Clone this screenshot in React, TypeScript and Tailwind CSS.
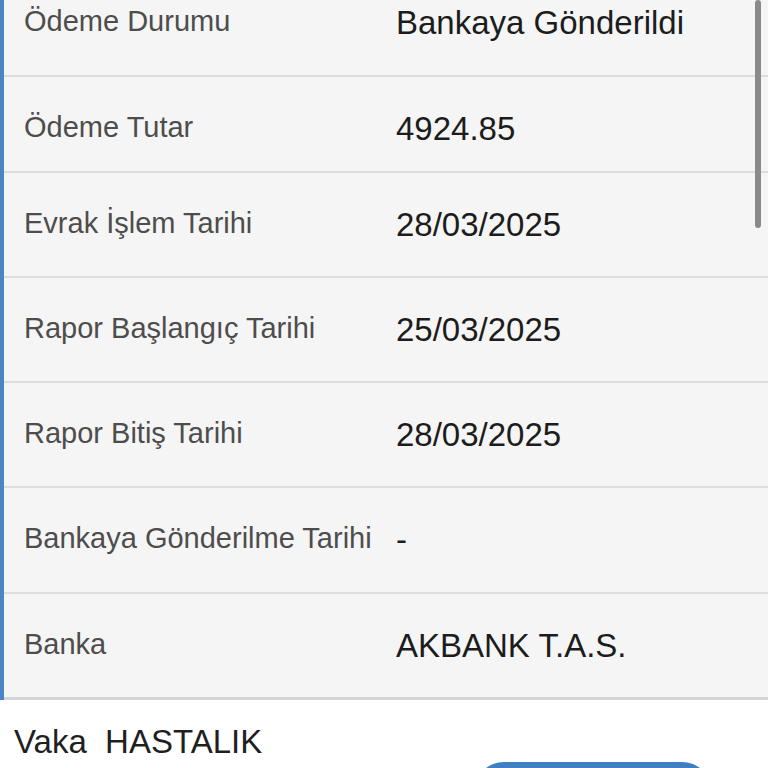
const rows: { label: string; value: string; h: string }[] = [
  { label: "Ödeme Durumu", value: "Bankaya Gönderildi", h: "h-[106px]" },
  { label: "Ödeme Tutar", value: "4924.85", h: "h-[96px]" },
  { label: "Evrak İşlem Tarihi", value: "28/03/2025", h: "h-[105px]" },
  { label: "Rapor Başlangıç Tarihi", value: "25/03/2025", h: "h-[105px]" },
  { label: "Rapor Bitiş Tarihi", value: "28/03/2025", h: "h-[105px]" },
  { label: "Bankaya Gönderilme Tarihi", value: "-", h: "h-[106px]" },
];

export default function App() {
  return (
    <div
      className="relative h-[768px] w-[768px] overflow-hidden bg-white"
      style={{ fontFamily: '"Liberation Sans", Arial, Helvetica, sans-serif' }}
    >
      {/* detail card */}
      <div className="-mt-[29px] border-l-4 border-[#4a86c6] bg-[#f5f5f5]">
        {rows.map((r) => (
          <div key={r.label} className={`flex items-start border-b-2 border-[#dddddd] ${r.h}`}>
            <div className="w-[392px] shrink-0 pl-5 pt-[33px] text-[29px] leading-[34px] text-[#4d4d4d]">
              {r.label}
            </div>
            <div className="pt-[33px] text-[33px] leading-[38px] text-[#1c1c1c]">{r.value}</div>
          </div>
        ))}
        <div className="flex h-[106px] items-start border-b-[3px] border-[#d4d4d4]">
          <div className="w-[392px] shrink-0 pl-5 pt-[33px] text-[29px] leading-[34px] text-[#4d4d4d]">
            Banka
          </div>
          <div className="pt-[33px] text-[33px] leading-[38px] text-[#1c1c1c]">AKBANK T.A.S.</div>
        </div>
      </div>

      {/* case info */}
      <div className="pl-[14px] pt-[22px] text-[33px] leading-[40px] text-[#1f1f1f]">
        Vaka&nbsp;&nbsp;HASTALIK
      </div>
      <div className="flex justify-end pr-[56px]">
        <button className="h-[60px] w-[238px] rounded-[30px] bg-[#3f7fc2]" />
      </div>

      {/* scroll indicator */}
      <div className="absolute right-[7px] top-0 h-[228px] w-[6px] rounded-full bg-[#8a8a8a]" />
    </div>
  );
}
